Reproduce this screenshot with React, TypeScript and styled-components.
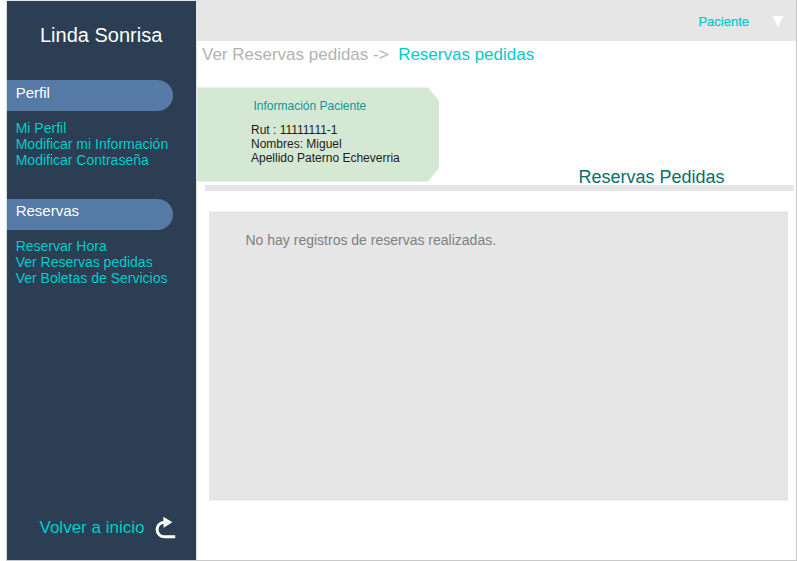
import React from 'react';
import styled, { createGlobalStyle } from 'styled-components';

const GlobalStyle = createGlobalStyle`
  * { box-sizing: border-box; }
  body {
    margin: 0;
    background: #fff;
    font-family: "Liberation Sans", Arial, sans-serif;
    overflow: hidden;
  }
`;

const Window = styled.div`
  display: flex;
  width: 791px;
  height: 561px;
  margin-left: 6px;
  border: 1px solid #c9c9c9;
  border-left-color: #d9e2e4;
  border-top-color: #e0e6e0;
`;

const Sidebar = styled.aside`
  display: flex;
  flex-direction: column;
  width: 189px;
  height: 559px;
  background: #2b3e53;
`;

const Brand = styled.h1`
  margin: 0;
  height: 79px;
  padding: 22px 0 0 33px;
  font-size: 20px;
  font-weight: 400;
  line-height: 24px;
  color: #fff;
`;

const MenuSection = styled.section`
  height: 118.5px;
`;

const MenuTitle = styled.h2`
  margin: 0;
  width: 166px;
  height: 31px;
  padding: 3.8px 0 0 8.7px;
  border-radius: 0 15.5px 15.5px 0;
  background: #547aa5;
  color: #fff;
  font-size: 15px;
  font-weight: 400;
  line-height: 18px;
`;

const MenuList = styled.nav`
  display: flex;
  flex-direction: column;
  padding: 8.8px 0 0 8.7px;
`;

const MenuLink = styled.a`
  color: #00cccc;
  font-size: 14px;
  line-height: 16px;
  white-space: nowrap;
`;

const BackLink = styled.a`
  display: flex;
  margin: auto 0 16px 32.5px;
  height: 30px;
  gap: 10px;
  color: #00cccc;
  font-size: 17px;
  line-height: 28px;
  white-space: nowrap;
`;

const ReturnIcon = styled.svg`
  width: 24px;
  height: 26px;
`;

const Main = styled.main`
  display: flex;
  flex-direction: column;
  width: 600px;
  border-left: 1px solid #e5e5e5;
`;

const TopBar = styled.header`
  display: flex;
  justify-content: flex-end;
  gap: 23px;
  height: 41px;
  margin-top: -1px;
  padding: 14px 12px 0 0;
  background: #e6e6e6;
  color: #00cccc;
  font-size: 13px;
  line-height: 16px;
  -webkit-text-stroke: 0.25px #00cccc;
`;

const Caret = styled.svg`
  width: 12px;
  height: 12px;
  margin-top: 2px;
`;

const Breadcrumb = styled.div`
  display: flex;
  gap: 9.5px;
  height: 46px;
  padding: 4px 0 0 5px;
  font-size: 17px;
  line-height: 20px;
`;

const Crumb = styled.span<{ $current?: boolean }>`
  color: ${({ $current }) => ($current ? '#00cccc' : '#b3b3b3')};
`;

const Summary = styled.div`
  display: flex;
  height: 98px;
`;

const PatientCard = styled.section`
  width: 242px;
  height: 95px;
  padding: 12px 0 0 54px;
  background: #d5e8d4;
  clip-path: polygon(0 0.5px, 231px 0.5px, 100% 14px, 100% 81px, 231px 94.5px, 0 94.5px);
  font-size: 12px;
  line-height: 14px;
  color: #1c1c1c;
`;

const CardTitle = styled.h3`
  margin: 0 0 10px 2.5px;
  color: #0f9696;
  font-size: 12px;
  font-weight: 400;
  line-height: 14px;
`;

const PageTitle = styled.h2`
  margin: 80px 0 0 139.5px;
  color: #0a6e6e;
  font-size: 18px;
  font-weight: 400;
  line-height: 20px;
  white-space: nowrap;
`;

const Rule = styled.hr`
  width: 589px;
  height: 6px;
  margin: 0 0 0 8px;
  border: 0;
  background: #e6e6e6;
`;

const Records = styled.section`
  width: 579px;
  height: 290px;
  margin: 20px 0 0 12px;
  padding: 20px 0 0 36.5px;
  border: solid #f1f1f1;
  border-width: 1px 0;
  background: #e6e6e6;
  color: #808080;
  font-size: 14px;
  line-height: 16px;
`;

const menus = [
  { title: 'Perfil', links: ['Mi Perfil', 'Modificar mi Información', 'Modificar Contraseña'] },
  { title: 'Reservas', links: ['Reservar Hora', 'Ver Reservas pedidas', 'Ver Boletas de Servicios'] },
];

const patient = ['Rut : 11111111-1', 'Nombres: Miguel', 'Apellido Paterno Echeverria'];

export default function App() {
  return (
    <>
      <GlobalStyle />
      <Window>
        <Sidebar>
          <Brand>Linda Sonrisa</Brand>
          {menus.map((menu) => (
            <MenuSection key={menu.title}>
              <MenuTitle>{menu.title}</MenuTitle>
              <MenuList>
                {menu.links.map((link) => (
                  <MenuLink key={link}>{link}</MenuLink>
                ))}
              </MenuList>
            </MenuSection>
          ))}
          <BackLink>
            Volver a inicio
            <ReturnIcon viewBox="0 0 24 26">
              <path d="M21.2 22.8H10.4a7.3 7.3 0 0 1 0-14.6" fill="none" stroke="#fff" strokeWidth="2.9" />
              <path d="M9.3 2.8L18.4 8.2L9.6 13.8Z" fill="#fff" />
            </ReturnIcon>
          </BackLink>
        </Sidebar>
        <Main>
          <TopBar>
            Paciente
            <Caret viewBox="0 0 12 12">
              <path d="M0.5 0H11.5L6 11.5Z" fill="#fff" />
            </Caret>
          </TopBar>
          <Breadcrumb>
            <Crumb>Ver Reservas pedidas -&gt;</Crumb>
            <Crumb $current>Reservas pedidas</Crumb>
          </Breadcrumb>
          <Summary>
            <PatientCard>
              <CardTitle>Información Paciente</CardTitle>
              {patient.map((line) => (
                <div key={line}>{line}</div>
              ))}
            </PatientCard>
            <PageTitle>Reservas Pedidas</PageTitle>
          </Summary>
          <Rule />
          <Records>No hay registros de reservas realizadas.</Records>
        </Main>
      </Window>
    </>
  );
}
